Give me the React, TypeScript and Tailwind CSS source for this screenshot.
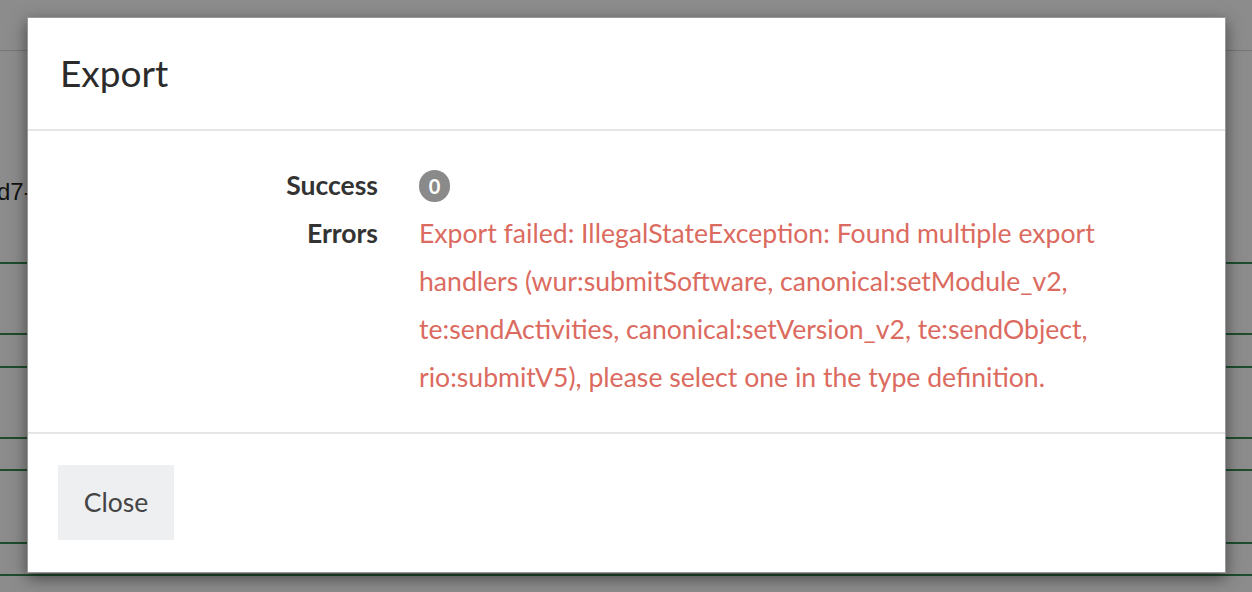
import React from "react";

const ROWS = [213, 71, 33, 71, 32, 73, 32];

const ERROR_LINES = [
  "Export failed: IllegalStateException: Found multiple export",
  "handlers (wur:submitSoftware, canonical:setModule_v2,",
  "te:sendActivities, canonical:setVersion_v2, te:sendObject,",
  "rio:submitV5), please select one in the type definition.",
];

function Backdrop() {
  return (
    <div className="h-full bg-white font-['Liberation_Sans',Arial,sans-serif] text-[#1f1f1f]">
      <div className="h-[51px] border-b border-[#d8d8d8]" />
      {ROWS.map((h, i) => (
        <div key={i} style={{ height: h }} className="border-b-2 border-[#388a52] flex items-center">
          {i === 0 && <span className="-ml-[3px] mt-[70px] text-[24px]">d7-4a1c</span>}
        </div>
      ))}
    </div>
  );
}

export default function App() {
  return (
    <div className="relative w-[1252px] h-[592px] overflow-hidden">
      <Backdrop />
      <div className="absolute inset-0 bg-black/[0.45]" />

      {/* Modal */}
      <div className="absolute left-[27px] top-[17px] w-[1199px] h-[556px] bg-white border border-black/40 shadow-[0_5px_15px_rgba(0,0,0,0.5)] flex flex-col font-['Lato','Noto_Sans',sans-serif] text-[#333]">
        <header className="h-[113px] shrink-0 px-[32px] flex items-center border-b-2 border-[#e5e5e5]">
          <h1 className="text-[37px] leading-none text-[#2b2b2b] -mt-[2px]">Export</h1>
        </header>

        <section className="py-[31px] border-b-2 border-[#e5e5e5]">
          <dl className="grid grid-cols-[350px_1fr] gap-x-[41px] text-[26.6px] leading-[48px]">
            <dt className="text-right font-bold h-[47px] leading-[47px] text-[26.5px]">Success</dt>
            <dd className="h-[47px] flex items-center">
              <span className="w-[31px] h-[32px] rounded-full bg-[#8a8a8a] text-white font-bold text-[20px] flex items-center justify-center leading-none">
                0
              </span>
            </dd>
            <dt className="text-right font-bold text-[26.5px]">Errors</dt>
            <dd className="text-[#db6b60]">
              {ERROR_LINES.map((line) => (
                <span key={line} className="block whitespace-nowrap">
                  {line}
                </span>
              ))}
            </dd>
          </dl>
        </section>

        <footer className="flex-1 pt-[31px] pl-[30px]">
          <button className="w-[116px] h-[75px] bg-[#eeeff1] text-[26.5px] text-[#444]">Close</button>
        </footer>
      </div>
    </div>
  );
}
